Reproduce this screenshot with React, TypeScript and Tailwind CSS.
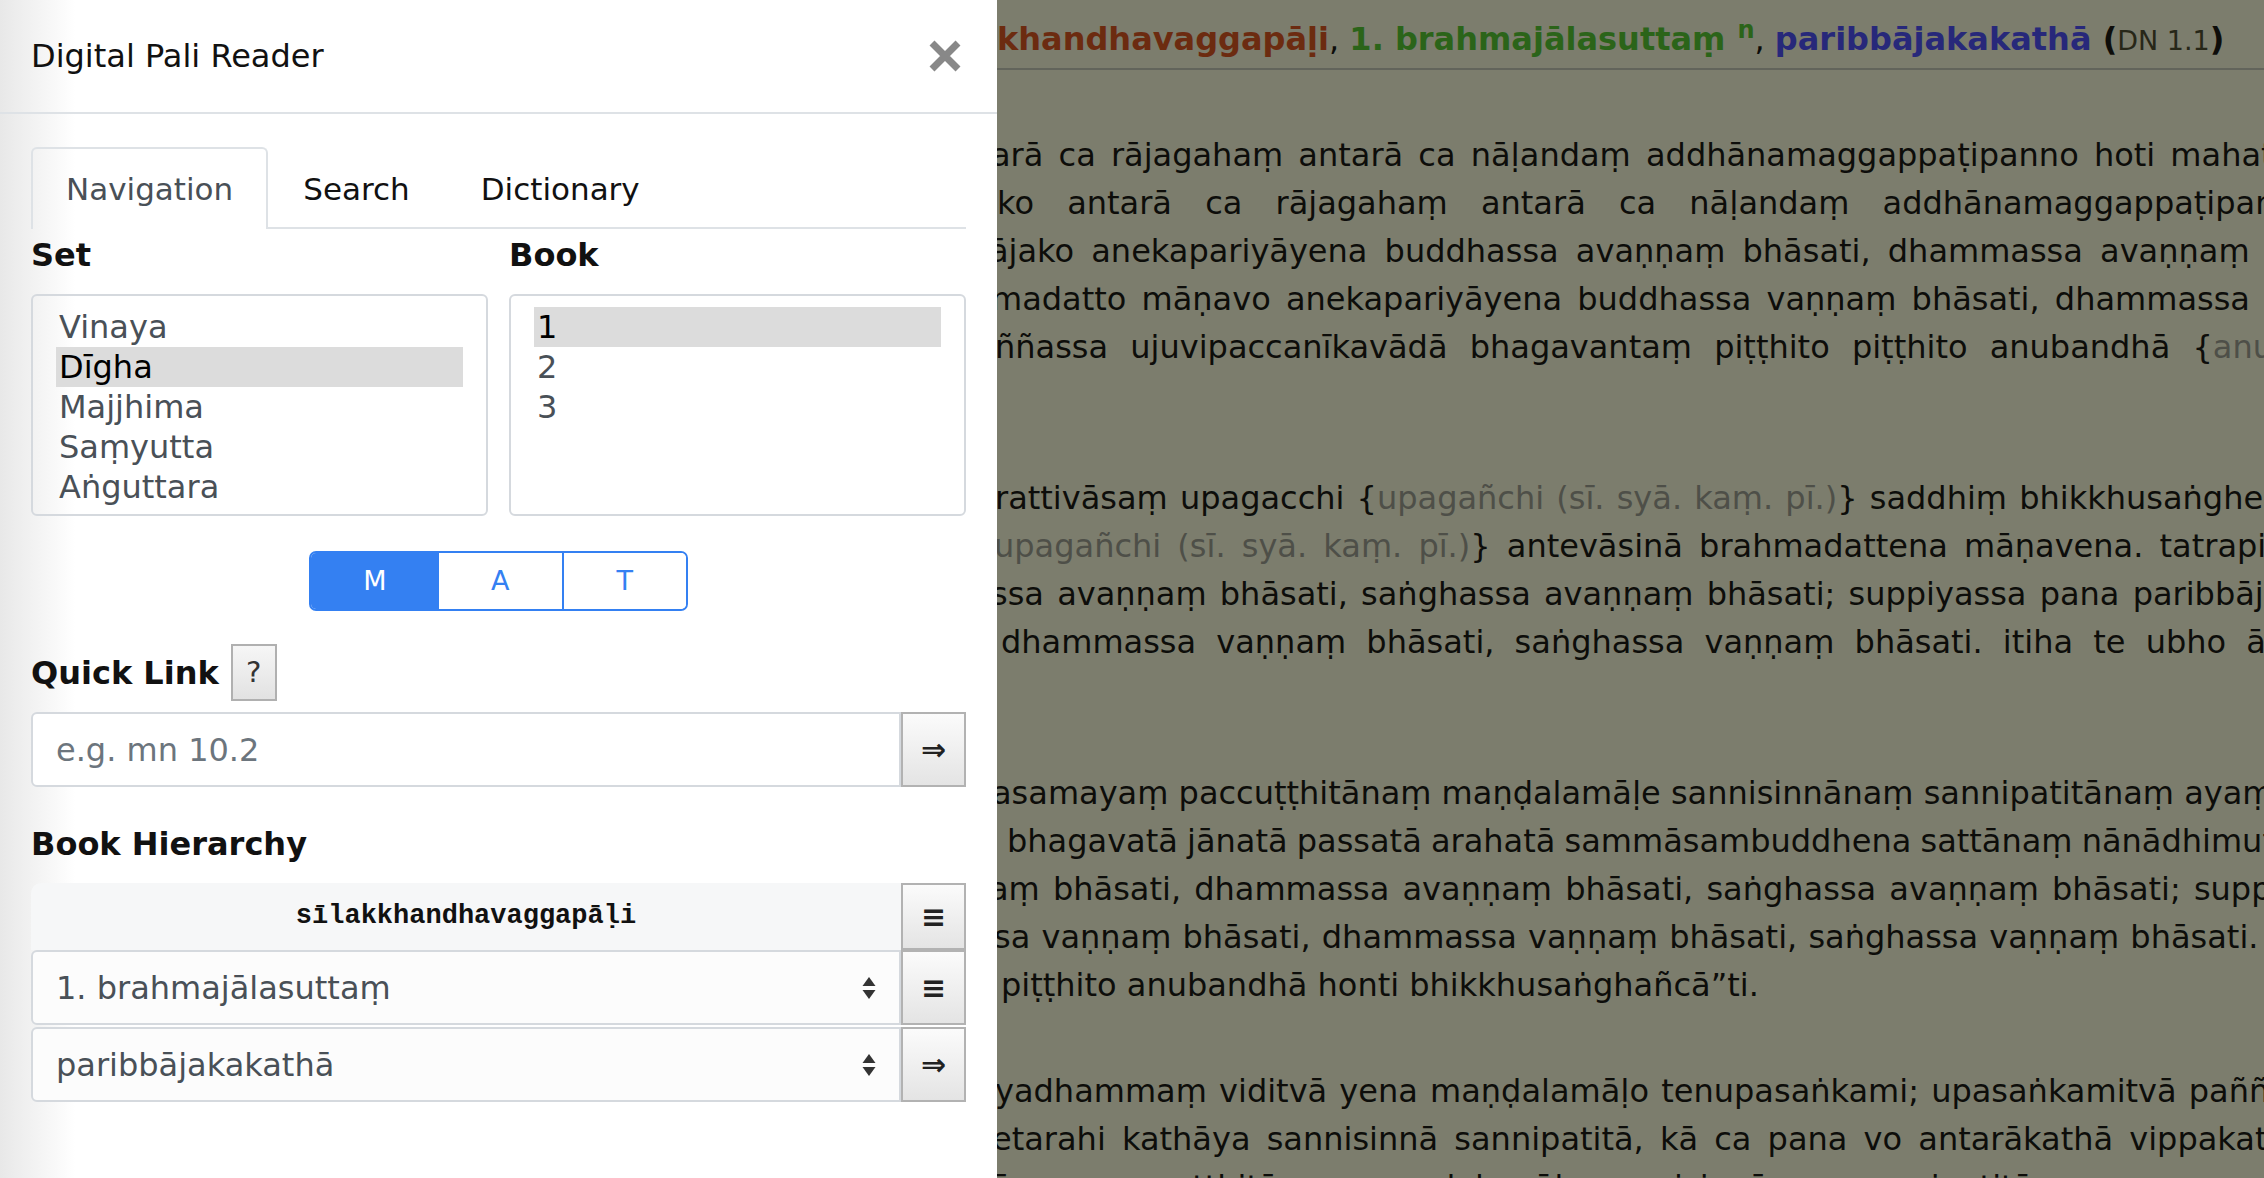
import React from "react";

const SETS = ["Vinaya", "Dīgha", "Majjhima", "Saṃyutta", "Aṅguttara"];
const BOOKS = ["1", "2", "3"];

// each part: [text, isVariantReading]
type Part = [string, boolean];
interface ReadLine {
  cls: string;
  parts: Part[];
}
interface Para {
  cls: string;
  lines: ReadLine[];
}

const PARAS: Para[] = [
  {
    cls: "mt-[61px]",
    lines: [
      { cls: "ml-[-6px] [word-spacing:5px]", parts: [["arā ca rājagahaṃ antarā ca nāḷandaṃ addhānamaggappaṭipanno hoti mahatā bhikkhusaṅghena", false]] },
      { cls: "ml-[0px] [word-spacing:23px]", parts: [["ko antarā ca rājagahaṃ antarā ca nāḷandaṃ addhānamaggappaṭipanno hoti", false]] },
      { cls: "ml-[-8px] [word-spacing:7px]", parts: [["ājako anekapariyāyena buddhassa avaṇṇaṃ bhāsati, dhammassa avaṇṇaṃ bhāsati", false]] },
      { cls: "ml-[-6px] [word-spacing:5px]", parts: [["madatto māṇavo anekapariyāyena buddhassa vaṇṇaṃ bhāsati, dhammassa vaṇṇaṃ", false]] },
      { cls: "ml-[-2px] [word-spacing:12px]", parts: [["ññassa ujuvipaccanīkavādā bhagavantaṃ piṭṭhito piṭṭhito anubandhā {", false], ["anubaddhā (sī. syā.)", true]] },
    ],
  },
  {
    cls: "mt-[103px]",
    lines: [
      { cls: "ml-[-2px] [word-spacing:2px]", parts: [["rattivāsaṃ upagacchi {", false], ["upagañchi (sī. syā. kaṃ. pī.)", true], ["} saddhiṃ bhikkhusaṅghena", false]] },
      { cls: "ml-[-3px] [word-spacing:6px]", parts: [["upagañchi (sī. syā. kaṃ. pī.)", true], ["} antevāsinā brahmadattena māṇavena. tatrapi", false]] },
      { cls: "ml-[-6px] [word-spacing:3px]", parts: [["ssa avaṇṇaṃ bhāsati, saṅghassa avaṇṇaṃ bhāsati; suppiyassa pana paribbājakassa", false]] },
      { cls: "ml-[4px] [word-spacing:10px]", parts: [["dhammassa vaṇṇaṃ bhāsati, saṅghassa vaṇṇaṃ bhāsati. itiha te ubho ācariyantevāsī", false]] },
    ],
  },
  {
    cls: "mt-[103px]",
    lines: [
      { cls: "ml-[-5px] [word-spacing:0px]", parts: [["asamayaṃ paccuṭṭhitānaṃ maṇḍalamāḷe sannisinnānaṃ sannipatitānaṃ ayaṃ saṅkhiyadhammo", false]] },
      { cls: "ml-[10px] [word-spacing:-1px]", parts: [["bhagavatā jānatā passatā arahatā sammāsambuddhena sattānaṃ nānādhimuttikatā", false]] },
      { cls: "ml-[-8px] [word-spacing:3px]", parts: [["aṃ bhāsati, dhammassa avaṇṇaṃ bhāsati, saṅghassa avaṇṇaṃ bhāsati; suppiyassa", false]] },
      { cls: "ml-[-3px] [word-spacing:1px]", parts: [["sa vaṇṇaṃ bhāsati, dhammassa vaṇṇaṃ bhāsati, saṅghassa vaṇṇaṃ bhāsati. itiha", false]] },
      { cls: "ml-[4px] [word-spacing:0px]", parts: [["piṭṭhito anubandhā honti bhikkhusaṅghañcā”ti.", false]] },
    ],
  },
  {
    cls: "mt-[58px]",
    lines: [
      { cls: "ml-[-2px] [word-spacing:2px]", parts: [["yadhammaṃ viditvā yena maṇḍalamāḷo tenupasaṅkami; upasaṅkamitvā paññatte", false]] },
      { cls: "ml-[-5px] [word-spacing:6px]", parts: [["etarahi kathāya sannisinnā sannipatitā, kā ca pana vo antarākathā vippakatā", false]] },
      { cls: "ml-[-5px] [word-spacing:4px]", parts: [["ānaṃ paccuṭṭhitānaṃ maṇḍalamāḷe sannisinnānaṃ sannipatitānaṃ ayaṃ", false]] },
    ],
  },
];

const CloseIcon = () => (
  <svg width="32" height="32" viewBox="0 0 32 32">
    <path d="M3 3L29 29M29 3L3 29" stroke="#888888" strokeWidth="7" />
  </svg>
);

const SelectArrows = () => (
  <svg width="16" height="26" viewBox="0 0 16 26" className="shrink-0">
    <path d="M1.5 11L8 2L14.5 11Z" fill="#333333" />
    <path d="M1.5 15L8 24L14.5 15Z" fill="#333333" />
  </svg>
);

const SideButton = ({ glyph }: { glyph: string }) => (
  <button className="w-[65px] shrink-0 border-2 border-[#b2b2b2] bg-[linear-gradient(#fbfbfb,#e4e4e4)] text-[30px] font-bold text-[#222] flex items-center justify-center">
    {glyph}
  </button>
);

const NavPanel = () => {
  return (
    <div className="w-[997px] h-full shrink-0 flex flex-col bg-[linear-gradient(to_right,#e8e8e8_0px,#ffffff_75px)]">
      {/* header */}
      <div className="h-[114px] shrink-0 flex items-center justify-between pl-[31px] pr-[36px] border-b-2 border-[#dee2e6]">
        <h5 className="text-[32px] leading-[38px] text-[#111]">Digital Pali Reader</h5>
        <CloseIcon />
      </div>

      <div className="px-[31px] flex flex-col">
        {/* tabs */}
        <div className="mt-[33px] flex">
          <div className="px-[33px] pt-[21px] pb-[21px] text-[31px] leading-[38px] text-[#495057] border-2 border-b-0 border-[#dee2e6] rounded-t-[6px]">
            Navigation
          </div>
          <div className="px-[35px] pt-[23px] pb-[19px] text-[31px] leading-[38px] text-[#111] border-b-2 border-[#dee2e6]">
            Search
          </div>
          <div className="px-[36px] pt-[23px] pb-[19px] text-[31px] leading-[38px] text-[#111] border-b-2 border-[#dee2e6]">
            Dictionary
          </div>
          <div className="flex-1 border-b-2 border-[#dee2e6]" />
        </div>

        {/* set / book */}
        <div className="mt-[7px] grid grid-cols-2 gap-[21px]">
          <div>
            <div className="text-[32px] leading-[38px] font-bold text-[#111]">Set</div>
            <div className="mt-[20px] h-[222px] border-2 border-[#d5d9de] rounded-[6px] pt-[11px] px-[23px]">
              {SETS.map((s) => (
                <div
                  key={s}
                  className={`pl-[3px] text-[32px] leading-[40px] ${
                    s === "Dīgha" ? "bg-[#dcdcdc] text-[#000]" : "text-[#495057]"
                  }`}
                >
                  {s}
                </div>
              ))}
            </div>
          </div>
          <div>
            <div className="text-[32px] leading-[38px] font-bold text-[#111]">Book</div>
            <div className="mt-[20px] h-[222px] border-2 border-[#d5d9de] rounded-[6px] pt-[11px] px-[23px]">
              {BOOKS.map((b) => (
                <div
                  key={b}
                  className={`pl-[3px] text-[32px] leading-[40px] ${
                    b === "1" ? "bg-[#dcdcdc] text-[#000]" : "text-[#495057]"
                  }`}
                >
                  {b}
                </div>
              ))}
            </div>
          </div>
        </div>

        {/* M A T */}
        <div className="mt-[35px] mx-auto w-[379px] h-[60px] flex border-2 border-[#3480f2] rounded-[7px] overflow-hidden text-[27px]">
          <div className="w-[128px] flex items-center justify-center bg-[#3480f2] text-white">M</div>
          <div className="flex-1 flex items-center justify-center bg-white text-[#3480f2]">A</div>
          <div className="flex-1 flex items-center justify-center bg-white text-[#3480f2] border-l-2 border-[#3480f2]">T</div>
        </div>

        {/* quick link */}
        <div className="mt-[33px] h-[57px] flex items-center gap-[12px]">
          <div className="text-[32px] leading-[38px] font-bold text-[#111]">Quick Link</div>
          <div className="w-[46px] h-[57px] border-2 border-[#b0b0b0] bg-[linear-gradient(#f6f6f6,#e2e2e2)] flex items-center justify-center text-[29px] text-[#333]">
            ?
          </div>
        </div>
        <div className="mt-[11px] h-[75px] flex">
          <input
            className="flex-1 min-w-0 border-2 border-[#d5d9de] rounded-l-[6px] bg-white pl-[23px] text-[32px] text-[#495057] placeholder:text-[#6c757d] outline-none"
            placeholder="e.g. mn 10.2"
          />
          <SideButton glyph="⇒" />
        </div>

        {/* book hierarchy */}
        <div className="mt-[38px] text-[32px] leading-[38px] font-bold text-[#111]">Book Hierarchy</div>
        <div className="mt-[20px] flex flex-col">
          <div className="h-[67px] flex">
            <div className="flex-1 bg-[#f6f7f8] rounded-tl-[10px] flex items-center justify-center font-['Liberation_Mono',monospace] font-bold text-[27px] text-[#111]">
              sīlakkhandhavaggapāḷi
            </div>
            <SideButton glyph="≡" />
          </div>
          <div className="h-[75px] flex">
            <div className="flex-1 border-2 border-[#d5d9de] rounded-l-[6px] bg-[#fcfcfc] pl-[23px] pr-[22px] flex items-center justify-between text-[32px] text-[#495057]">
              <span>1. brahmajālasuttaṃ</span>
              <SelectArrows />
            </div>
            <SideButton glyph="≡" />
          </div>
          <div className="mt-[2px] h-[75px] flex">
            <div className="flex-1 border-2 border-[#d5d9de] rounded-l-[6px] bg-[#fcfcfc] pl-[23px] pr-[22px] flex items-center justify-between text-[32px] text-[#495057]">
              <span>paribbājakakathā</span>
              <SelectArrows />
            </div>
            <SideButton glyph="⇒" />
          </div>
        </div>
      </div>
    </div>
  );
};

const ReadingPane = () => {
  return (
    <div className="flex-1 min-w-0 h-full overflow-hidden bg-[#7c7d6d] text-[#0d0d0a]">
      <div className="h-[70px] pt-[20px] border-b-2 border-[#62645b] whitespace-nowrap text-[32px] leading-[38px] ml-[0px]">
        <span className="font-bold text-[#6c2b10]">khandhavaggapāḷi</span>
        <span>, </span>
        <span className="font-bold text-[#2b6419]">1. brahmajālasuttaṃ</span>
        <sup className="ml-[12px] font-bold text-[24px] text-[#2b6419]">n</sup>
        <span>, </span>
        <span className="font-bold text-[#27287a]">paribbājakakathā</span>
        <span className="font-bold"> (</span>
        <span className="text-[27px] text-[#272718]">DN 1.1</span>
        <span className="font-bold">)</span>
      </div>
      {PARAS.map((p, i) => (
        <div key={i} className={p.cls}>
          {p.lines.map((l, j) => (
            <div key={j} className={`whitespace-nowrap text-[32px] leading-[48px] ${l.cls}`}>
              {l.parts.map(([t, v], k) => (
                <span key={k} className={v ? "text-[#4e4f48]" : ""}>
                  {t}
                </span>
              ))}
            </div>
          ))}
        </div>
      ))}
    </div>
  );
};

export default function App() {
  return (
    <div className="w-[2264px] h-[1178px] flex overflow-hidden font-['DejaVu_Sans',sans-serif]">
      <NavPanel />
      <ReadingPane />
    </div>
  );
}
